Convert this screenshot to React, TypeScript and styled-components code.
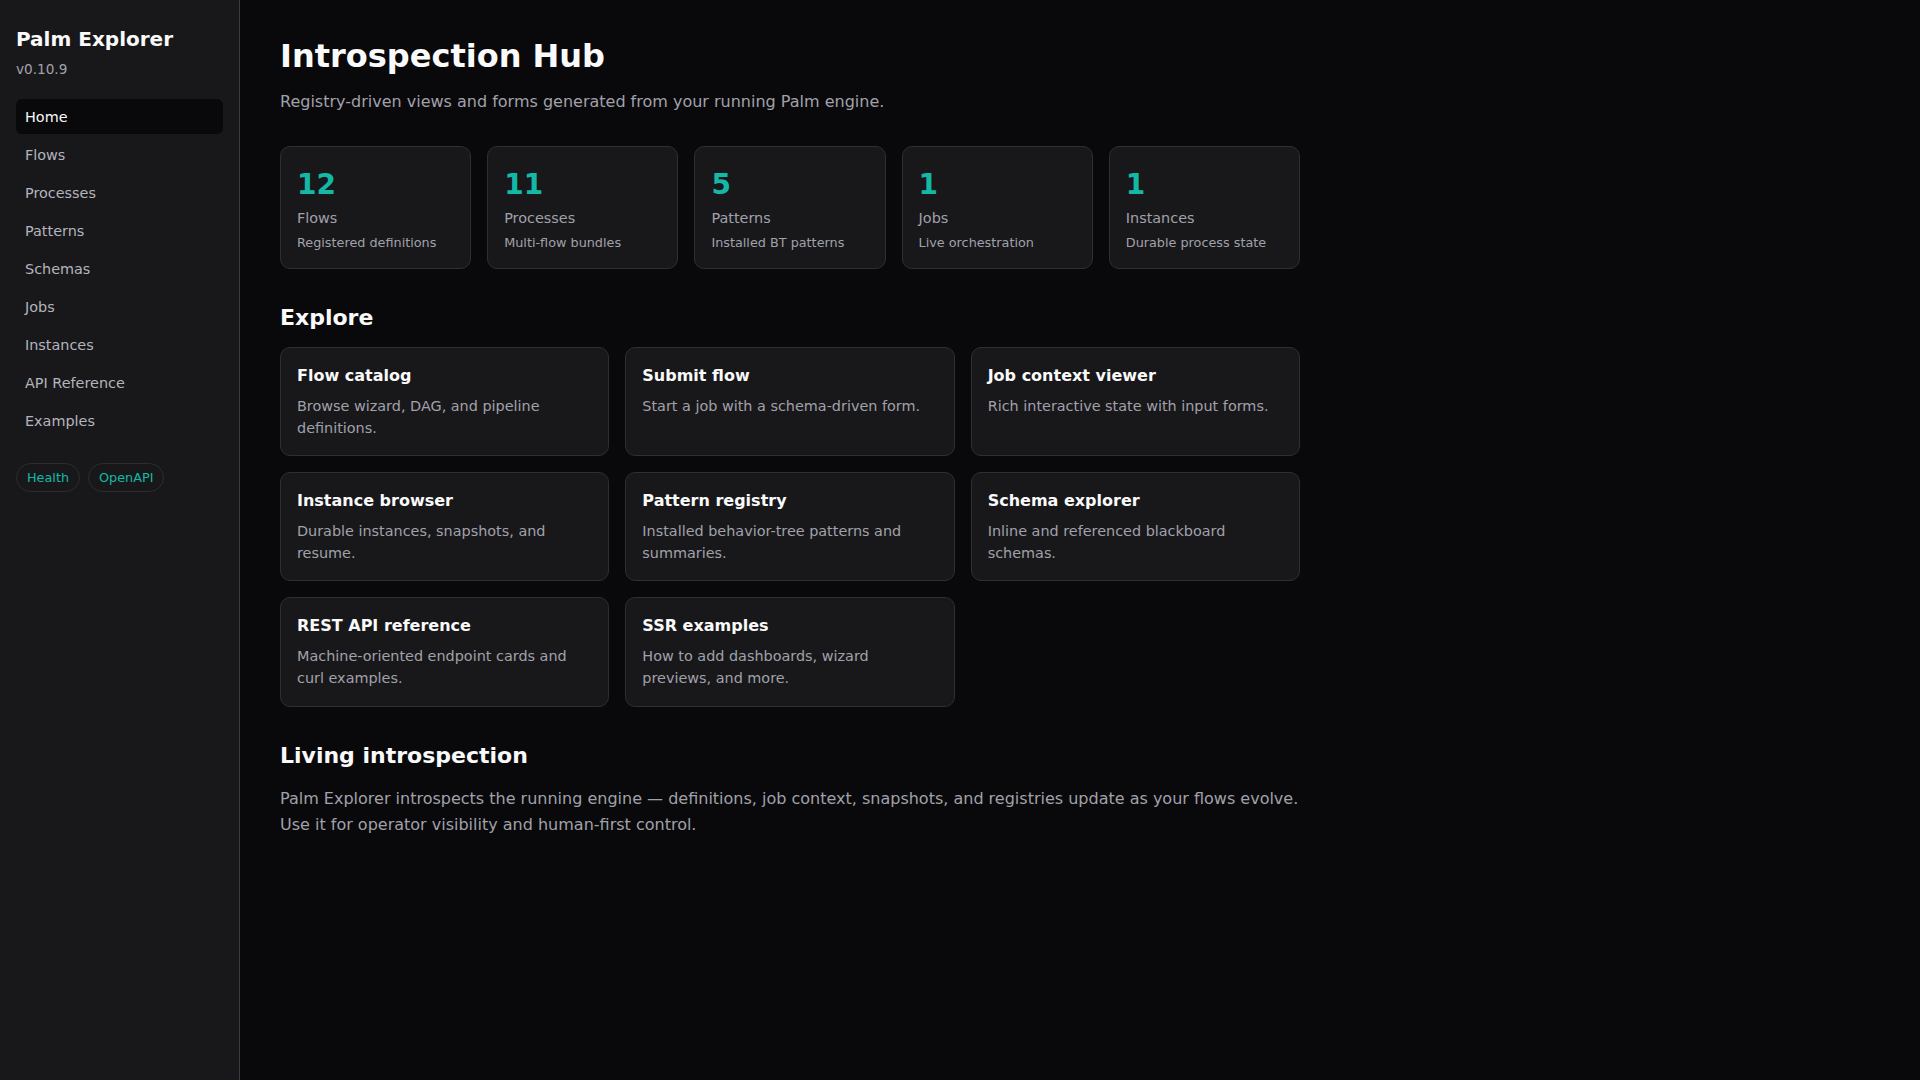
import React from "react";
import styled, { createGlobalStyle } from "styled-components";

const GlobalStyle = createGlobalStyle`
  html, body {
    margin: 0;
    padding: 0;
    background: #09090b;
    font-family: "DejaVu Sans", "Liberation Sans", sans-serif;
    color: #fafafa;
  }
  * { box-sizing: border-box; }
`;

const Shell = styled.div`
  display: flex;
  min-height: 100vh;
`;

const Sidebar = styled.aside`
  width: 240px;
  flex-shrink: 0;
  background: #18181b;
  border-right: 1px solid #3a3a40;
  padding: 26px 16px;
`;

const Brand = styled.div`
  font-size: 20px;
  font-weight: 700;
  line-height: 26px;
  color: #fafafa;
`;

const Version = styled.div`
  margin-top: 9px;
  font-size: 13.6px;
  line-height: 17px;
  color: #a1a1aa;
`;

const Nav = styled.nav`
  margin-top: 21px;
  display: flex;
  flex-direction: column;
  gap: 3px;
`;

const NavItem = styled.a<{ $active?: boolean }>`
  display: flex;
  align-items: center;
  height: 35px;
  padding: 0 9px;
  border-radius: 6px;
  font-size: 14.4px;
  text-decoration: none;
  color: ${(p) => (p.$active ? "#fafafa" : "#b4b4bb")};
  background: ${(p) => (p.$active ? "#09090b" : "transparent")};
`;

const Pills = styled.div`
  margin-top: 25px;
  display: flex;
  gap: 8px;
`;

const Pill = styled.span`
  display: inline-flex;
  align-items: center;
  height: 29px;
  padding: 0 10px;
  border: 1px solid #2c2c31;
  border-radius: 999px;
  font-size: 12.8px;
  color: #14b8a6;
`;

const Main = styled.main`
  flex: 1;
  padding: 37px 40px;
`;

const Content = styled.div`
  max-width: 1020px;
`;

const Title = styled.h1`
  margin: 0;
  font-size: 32px;
  line-height: 38px;
  font-weight: 700;
  color: #fafafa;
`;

const Lead = styled.p`
  margin: 15px 0 0;
  font-size: 16px;
  line-height: 24px;
  color: #a1a1aa;
`;

const StatGrid = styled.div`
  margin-top: 32px;
  display: grid;
  grid-template-columns: repeat(5, 1fr);
  gap: 16px;
`;

const StatCard = styled.div`
  background: #18181b;
  border: 1px solid #2e2e33;
  border-radius: 10px;
  padding: 21px 16px 16px;
`;

const StatValue = styled.div`
  font-size: 28px;
  line-height: 34px;
  font-weight: 700;
  color: #14b8a6;
`;

const StatLabel = styled.div`
  margin-top: 6px;
  font-size: 14.4px;
  line-height: 20px;
  color: #a1a1aa;
`;

const StatHint = styled.div`
  margin-top: 6px;
  font-size: 12.8px;
  line-height: 18px;
  color: #a1a1aa;
`;

const SectionTitle = styled.h2`
  margin: 35px 0 0;
  font-size: 22px;
  line-height: 28px;
  font-weight: 700;
  color: #fafafa;
`;

const CardGrid = styled.div`
  margin-top: 15px;
  display: grid;
  grid-template-columns: repeat(3, 1fr);
  gap: 16px;
`;

const LinkCard = styled.a`
  display: block;
  background: #18181b;
  border: 1px solid #2e2e33;
  border-radius: 10px;
  padding: 16px;
  text-decoration: none;
`;

const CardTitle = styled.div`
  font-size: 16px;
  line-height: 24px;
  font-weight: 700;
  color: #fafafa;
`;

const CardDesc = styled.div`
  margin-top: 8px;
  font-size: 14.4px;
  line-height: 1.5;
  min-height: 43.2px;
  color: #a1a1aa;
`;

const Body = styled.p`
  margin: 16px 0 0;
  font-size: 16px;
  line-height: 26px;
  color: #a1a1aa;
`;

const nav = [
  "Home",
  "Flows",
  "Processes",
  "Patterns",
  "Schemas",
  "Jobs",
  "Instances",
  "API Reference",
  "Examples",
];

const stats = [
  { value: 12, label: "Flows", hint: "Registered definitions" },
  { value: 11, label: "Processes", hint: "Multi-flow bundles" },
  { value: 5, label: "Patterns", hint: "Installed BT patterns" },
  { value: 1, label: "Jobs", hint: "Live orchestration" },
  { value: 1, label: "Instances", hint: "Durable process state" },
];

const explore = [
  { title: "Flow catalog", desc: "Browse wizard, DAG, and pipeline definitions." },
  { title: "Submit flow", desc: "Start a job with a schema-driven form." },
  { title: "Job context viewer", desc: "Rich interactive state with input forms." },
  { title: "Instance browser", desc: "Durable instances, snapshots, and resume." },
  { title: "Pattern registry", desc: "Installed behavior-tree patterns and summaries." },
  { title: "Schema explorer", desc: "Inline and referenced blackboard schemas." },
  { title: "REST API reference", desc: "Machine-oriented endpoint cards and curl examples." },
  { title: "SSR examples", desc: "How to add dashboards, wizard previews, and more." },
];

export default function App() {
  return (
    <>
      <GlobalStyle />
      <Shell>
        <Sidebar>
          <Brand>Palm Explorer</Brand>
          <Version>v0.10.9</Version>
          <Nav>
            {nav.map((item) => (
              <NavItem key={item} $active={item === "Home"}>
                {item}
              </NavItem>
            ))}
          </Nav>
          <Pills>
            <Pill>Health</Pill>
            <Pill>OpenAPI</Pill>
          </Pills>
        </Sidebar>
        <Main>
          <Content>
            <Title>Introspection Hub</Title>
            <Lead>Registry-driven views and forms generated from your running Palm engine.</Lead>

            <StatGrid>
              {stats.map((s) => (
                <StatCard key={s.label}>
                  <StatValue>{s.value}</StatValue>
                  <StatLabel>{s.label}</StatLabel>
                  <StatHint>{s.hint}</StatHint>
                </StatCard>
              ))}
            </StatGrid>

            <SectionTitle>Explore</SectionTitle>
            <CardGrid>
              {explore.map((c) => (
                <LinkCard key={c.title}>
                  <CardTitle>{c.title}</CardTitle>
                  <CardDesc>{c.desc}</CardDesc>
                </LinkCard>
              ))}
            </CardGrid>

            <SectionTitle>Living introspection</SectionTitle>
            <Body>
              Palm Explorer introspects the running engine — definitions, job context, snapshots, and
              registries update as your flows evolve. Use it for operator visibility and human-first
              control.
            </Body>
          </Content>
        </Main>
      </Shell>
    </>
  );
}
